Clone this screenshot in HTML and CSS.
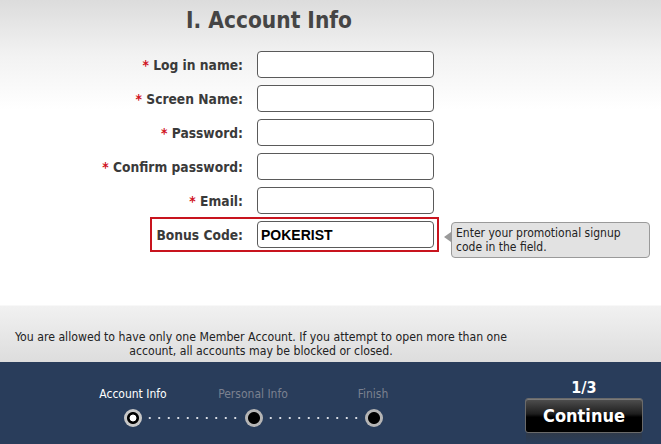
FILE: index.html
```html
<!DOCTYPE html>
<html>
<head>
<meta charset="utf-8">
<link rel="stylesheet" href="styles.css">
</head>
<body>
<div class="page">
  <div class="main">
    <h1 class="title">I. Account Info</h1>
    <div class="form">
      <div class="row"><label class="label"><span class="req">*</span> Log in name:</label><input class="field" type="text"></div>
      <div class="row"><label class="label"><span class="req">*</span> Screen Name:</label><input class="field" type="text"></div>
      <div class="row"><label class="label"><span class="req">*</span> Password:</label><input class="field" type="password"></div>
      <div class="row"><label class="label"><span class="req">*</span> Confirm password:</label><input class="field" type="password"></div>
      <div class="row"><label class="label"><span class="req">*</span> Email:</label><input class="field" type="text"></div>
      <div class="row bonus-row">
        <div class="bonus">
          <label class="label bonus-label">Bonus Code:</label><input class="field code" type="text" value="POKERIST">
        </div>
        <div class="tip">Enter your promotional signup<br>code in the field.</div>
      </div>
    </div>
    <p class="notice">You are allowed to have only one Member Account. If you attempt to open more than one account, all accounts may be blocked or closed.</p>
  </div>
  <div class="bar">
    <div class="steps">
      <div class="labels">
        <span class="step-label active">Account Info</span>
        <span class="step-label">Personal Info</span>
        <span class="step-label">Finish</span>
      </div>
      <div class="track">
        <span class="dot current"></span>
        <span class="line"></span>
        <span class="dot"></span>
        <span class="line"></span>
        <span class="dot"></span>
      </div>
    </div>
    <div class="action">
      <div class="count">1/3</div>
      <button class="btn">Continue</button>
      <div class="reflect"></div>
    </div>
  </div>
</div>
</body>
</html>
```

FILE: styles.css
```css
html, body {
  margin: 0;
  padding: 0;
}
body {
  width: 661px;
  height: 444px;
  overflow: hidden;
  font-family: "DejaVu Sans Condensed", "DejaVu Sans", "Liberation Sans", sans-serif;
  color: #333;
}
.page {
  display: flex;
  flex-direction: column;
  height: 444px;
}
.main {
  height: 362px;
  display: flex;
  flex-direction: column;
  background: linear-gradient(to bottom, #dcdcdc 0px, #f2f2f2 55px, #ffffff 110px, #ffffff 305px, #f1f1f1 306px, #dddddd 362px);
}
.title {
  margin: 0;
  padding-top: 6px;
  width: 538px;
  text-align: center;
  font-size: 22.5px;
  line-height: 28px;
  font-weight: bold;
  color: #454545;
  margin-bottom: 17px;
}
.form {
  display: flex;
  flex-direction: column;
}
.row {
  display: flex;
  align-items: center;
  height: 27px;
  margin-bottom: 7px;
}
.label {
  width: 243px;
  box-sizing: border-box;
  text-align: right;
  font-size: 13.7px;
  font-weight: bold;
  color: #3a3a3a;
  white-space: nowrap;
}
.req {
  color: #d01020;
}
.field {
  margin: 0 0 0 14px;
  width: 177px;
  height: 27px;
  box-sizing: border-box;
  border: 1px solid #5a5a5a;
  border-radius: 4px;
  background: #fff;
  padding: 0 3px;
  font-family: "Liberation Sans", Arial, sans-serif;
  font-size: 14px;
  font-weight: bold;
  color: #000;
  outline: none;
}
.bonus-row {
  height: auto;
  margin-top: -4px;
  align-items: flex-start;
}
.bonus {
  display: flex;
  align-items: center;
  margin-left: 150px;
  border: 2px solid #c8141e;
  padding: 2px 3px 2px 0;
}
.bonus-label {
  width: 91px;
}
.tip {
  position: relative;
  margin-left: 12px;
  margin-top: 5px;
  width: 199px;
  height: 36px;
  box-sizing: border-box;
  background: #e2e2e2;
  border: 1px solid #9a9a9a;
  border-radius: 4px;
  padding: 3px 0 0 4px;
  font-size: 12px;
  line-height: 14px;
  color: #222;
}
.tip::before {
  content: "";
  position: absolute;
  left: -8px;
  top: 9px;
  border-style: solid;
  border-width: 5px 7px 5px 0;
  border-color: transparent #9a9a9a transparent transparent;
}
.notice {
  margin: auto 0 4px 0;
  width: 522px;
  text-align: center;
  font-size: 12.2px;
  line-height: 14px;
  color: #222;
}
.bar {
  height: 82px;
  background: #293d5b;
  display: flex;
  justify-content: space-between;
}
.steps {
  padding-top: 25px;
  margin-left: 73px;
}
.labels {
  display: grid;
  grid-template-columns: 120px 120px 120px;
}
.step-label {
  justify-self: center;
  font-size: 12px;
  line-height: 14px;
  color: #7b8190;
}
.step-label.active {
  color: #fff;
}
.track {
  display: flex;
  align-items: center;
  margin-left: 51px;
  width: 259px;
  margin-top: 8px;
}
.dot {
  width: 18px;
  height: 18px;
  border-radius: 50%;
  flex: none;
  background: radial-gradient(circle, #000 0, #000 5.5px, #b5b5b5 6.5px);
}
.dot.current {
  background: radial-gradient(circle, #fff 0, #fff 3px, #000 3.8px, #000 5.5px, #c8c8c8 6.5px);
}
.line {
  flex: 1;
  height: 2px;
  margin: 0 3px;
  background: radial-gradient(circle, #d8dce4 0, #d8dce4 0.8px, transparent 1.2px) 0 0 / 9.5px 2px repeat-x;
}
.action {
  margin-right: 18px;
  padding-top: 16px;
  display: flex;
  flex-direction: column;
  align-items: center;
  width: 118px;
}
.count {
  font-size: 16px;
  line-height: 20px;
  font-weight: bold;
  color: #fff;
}
.btn {
  width: 118px;
  height: 35px;
  border: 1px solid #6a6a6a;
  border-radius: 3px;
  background: linear-gradient(to bottom, #505050 0%, #1e1e1e 45%, #000 55%, #000 100%);
  color: #fff;
  font-family: "DejaVu Sans Condensed", "DejaVu Sans", sans-serif;
  font-size: 18px;
  font-weight: bold;
  padding: 0;
  box-shadow: inset 0 1px 0 rgba(255,255,255,0.25);
}
.reflect {
  width: 116px;
  height: 11px;
  background: linear-gradient(to bottom, #2f3a4a, #293d5b);
}
```
